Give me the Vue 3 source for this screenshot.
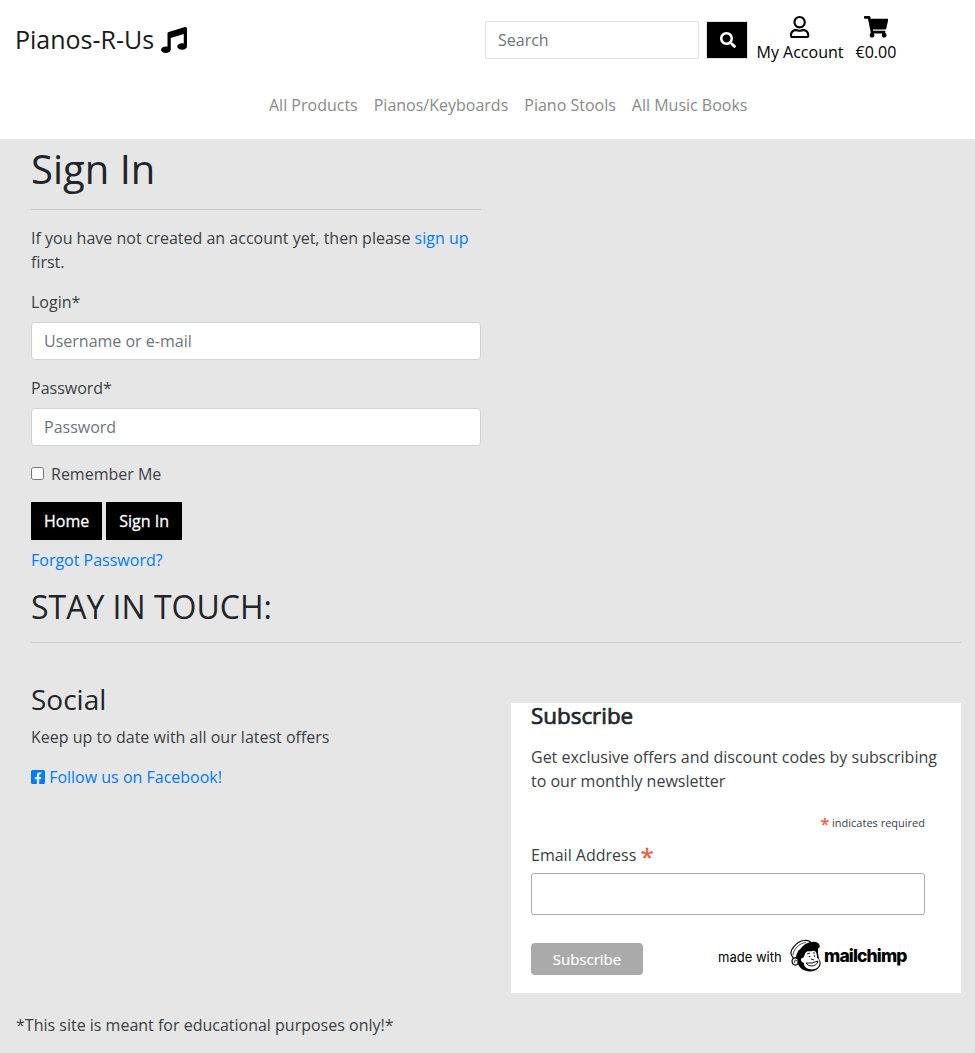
<script setup>
const links = ['All Products', 'Pianos/Keyboards', 'Piano Stools', 'All Music Books']
</script>

<template>
  <div class="page">
    <header>
      <div class="top">
        <a class="brand">Pianos-R-Us
          <svg class="music" viewBox="0 0 512 512"><path d="M511.99 32.01c0-21.71-21.1-37.01-41.6-30.51L150.4 96c-13.3 4.2-22.4 16.5-22.4 30.5v261.42c-10.05-2.38-20.72-3.92-32-3.92-53.02 0-96 28.65-96 64s42.98 64 96 64 96-28.65 96-64V214.31l256-75.02v184.63c-10.05-2.38-20.72-3.92-32-3.92-53.02 0-96 28.65-96 64s42.98 64 96 64 96-28.65 96-64l-.01-351.99z" /></svg>
        </a>
        <form class="search" @submit.prevent>
          <input type="text" placeholder="Search" />
          <button aria-label="Search"><svg viewBox="0 0 512 512"><path d="M505 442.7L405.3 343c-4.5-4.5-10.6-7-17-7H372c27.6-35.3 44-79.700 44-128C416 93.100 322.900 0 208 0S0 93.100 0 208s93.100 208 208 208c48.300 0 92.700-16.400 128-44v16.300c0 6.400 2.500 12.500 7 17l99.700 99.700c9.400 9.400 24.600 9.400 33.900 0l28.300-28.300c9.400-9.400 9.400-24.600.1-34zM208 336c-70.700 0-128-57.200-128-128 0-70.700 57.200-128 128-128 70.700 0 128 57.200 128 128 0 70.700-57.200 128-128 128z" /></svg></button>
        </form>
        <a class="tool account"><svg viewBox="0 0 448 512"><path d="M313.600 304c-28.700 0-42.500 16-89.600 16-47.100 0-60.800-16-89.600-16C60.200 304 0 364.200 0 438.400V464c0 26.500 21.500 48 48 48h352c26.500 0 48-21.500 48-48v-25.600c0-74.200-60.200-134.400-134.400-134.400zM400 464H48v-25.600c0-47.600 38.800-86.400 86.400-86.400 14.600 0 38.300 16 89.600 16 51.700 0 74.900-16 89.600-16 47.600 0 86.400 38.800 86.400 86.400V464zM224 288c79.500 0 144-64.500 144-144S303.500 0 224 0 80 64.500 80 144s64.500 144 144 144zm0-240c52.900 0 96 43.100 96 96s-43.100 96-96 96-96-43.100-96-96 43.100-96 96-96z" /></svg><span>My Account</span></a>
        <a class="tool cart"><svg viewBox="0 0 576 512"><path d="M528.120 301.319l47.273-208C578.806 78.301 567.391 64 551.990 64H159.208l-9.166-44.810C147.758 8.021 137.930 0 126.529 0H24C10.745 0 0 10.745 0 24v16c0 13.255 10.745 24 24 24h69.883l70.248 343.435C147.325 417.100 136 435.222 136 456c0 30.928 25.072 56 56 56s56-25.072 56-56c0-15.674-6.447-29.835-16.824-40h209.647C430.447 426.165 424 440.326 424 456c0 30.928 25.072 56 56 56s56-25.072 56-56c0-22.172-12.888-41.332-31.579-50.405l5.517-24.276c3.413-15.018-8.002-29.319-23.403-29.319H218.117l-6.545-32h293.145c11.206 0 20.920-7.754 23.403-18.681z" /></svg><span>€0.00</span></a>
      </div>
      <nav><a v-for="l in links" :key="l">{{ l }}</a></nav>
    </header>

    <main>
      <section class="signin">
        <h1>Sign In</h1>
        <hr />
        <p>If you have not created an account yet, then please <a class="link">sign up</a> first.</p>
        <label for="login">Login*</label>
        <input id="login" class="field" type="text" placeholder="Username or e-mail" />
        <label for="pw">Password*</label>
        <input id="pw" class="field" type="password" placeholder="Password" />
        <div class="remember"><input id="rem" type="checkbox" /><label for="rem">Remember Me</label></div>
        <div class="buttons"><button>Home</button><button>Sign In</button></div>
        <a class="link forgot">Forgot Password?</a>
      </section>

      <section class="touch">
        <h2>STAY IN TOUCH:</h2>
        <hr />
        <div class="cols">
          <div class="social">
            <h3>Social</h3>
            <p>Keep up to date with all our latest offers</p>
            <a class="link"><svg class="fb" viewBox="0 0 448 512"><path d="M400 32H48A48 48 0 0 0 0 80v352a48 48 0 0 0 48 48h137.250V327.690h-63V256h63v-54.640c0-62.150 37-96.480 93.670-96.480 27.140 0 55.520 4.840 55.520 4.840v61h-31.270c-30.810 0-40.420 19.120-40.420 38.730V256h68.780l-11 71.690h-57.780V480H400a48 48 0 0 0 48-48V80a48 48 0 0 0-48-48z" /></svg> Follow us on Facebook!</a>
          </div>
          <form class="subscribe" @submit.prevent>
            <h4>Subscribe</h4>
            <p>Get exclusive offers and discount codes by subscribing to our monthly newsletter</p>
            <div class="required"><i>*</i> indicates required</div>
            <label for="mail">Email Address <i>*</i></label>
            <input id="mail" type="email" />
            <div class="bottom">
              <button>Subscribe</button>
              <div class="made">
                <span class="with">made with</span>
                <svg class="chimp" viewBox="0 0 46 44">
                  <path d="M13 21 L16 15 L24 11 L34 11 L34 19 L35 25 C38 28 37 34 31 36.500 C24 39 16 36 14 30 L11 27 Z" />
                  <path d="M12 26 C10 25 9 24 8 22 C4 17 13 7 20 6.500 C24 6 27 8 28 10 C21 11 15 15 13 21 Z" fill="#fff" stroke="#000" stroke-width="1.200" />
                  <path d="M9 21 C9 16 15 9 22 8.500" fill="none" stroke="#000" stroke-width=".7" />
                  <path d="M17 15 C19 10 26 7 32 8 C35 9 37 12 35 14 C31 17 29 13 24 14 C20 14 18 16 15 19 Z" />
                  <path d="M21 20 C22 16 27 18 28 17 C32 16 33 19 33 24 C36 25 37 31 33 34 C29 37 19 35 20 29 C17 28 16 25 18 24 C20 24 20 22 21 20 Z" fill="#fff" />
                  <path d="M14 25 C12 23 8 24 8 27 C8 31 11 32 14 30 Z" fill="#fff" stroke="#000" stroke-width="1.200" />
                  <path d="M13 27 C11 25 10 27 11 29 M22 29 Q28 30 34 27 Q33 32 27 32 Q24 32 22 29 M23 20 L26 19 M29 19 L31 19 M27 25 L30 26" fill="none" stroke="#000" stroke-width=".9" />
                  <circle cx="25.500" cy="22.500" r=".8" /><circle cx="30.500" cy="22" r=".8" />
                </svg>
                <span class="word">mailchimp</span>
              </div>
            </div>
          </form>
        </div>
      </section>
    </main>
    <footer>*This site is meant for educational purposes only!*</footer>
  </div>
</template>

<style>
body { background: #e6e6e6; }
</style>

<style scoped>
.page, .page * { box-sizing: border-box; }
.page { width: 975px; height: 1053px; overflow: hidden; background: #e6e6e6; color: #3a4045; font: 400 16px/24px "Open Sans", sans-serif; }
input, button { font: inherit; }
h1, h2, h3, h4, p { margin: 0; }
h1, h2, h3, h4 { color: #212529; font-weight: 400; }
i { font-style: normal; }
header { height: 139px; background: #fff; color: #000; }
.top { display: flex; height: 93px; padding-left: 15px; }
.brand { width: 470px; padding-top: 19px; font-size: 25px; line-height: 40px; color: #1a1a1a; white-space: nowrap; }
.music { width: 26px; height: 26px; vertical-align: -4px; fill: #000; }
.search { display: flex; padding-top: 21px; width: 272px; gap: 7px; }
.search input { width: 214px; height: 38px; padding: 0 12px; border: 1px solid #dee2e6; background: #fff; outline: 0; }
.search button { width: 42px; height: 38px; padding: 0; border: 1px solid #dee2e6; background: #000; display: grid; place-items: center; }
.search svg { width: 16px; height: 16px; fill: #fff; margin-left: 1px; }
.tool { display: flex; flex-direction: column; align-items: center; padding-top: 16px; white-space: nowrap; }
.tool svg { height: 22px; }
.tool span { margin-top: 2px; }
.account { width: 86px; }
.cart { margin-left: 12.5px; }
.cart svg { height: 21.5px; margin-bottom: .5px; }
nav { display: flex; gap: 16px; padding-left: 269px; color: #8a8a8a; }
::placeholder { color: #6c757d; opacity: 1; }
main { padding: 0 14px 0 31px; }
.signin { width: 450px; display: flex; flex-direction: column; }
h1 { font-size: 40px; line-height: 48px; margin-top: 6px; }
hr { width: 100%; border: 0; border-top: 1px solid #cbcbcb; margin: 16px 0 16px; }
.signin p { margin-bottom: 16px; }
.signin > label { margin-bottom: 8px; }
.field { height: 38px; border: 1px solid #ced4da; border-radius: 4px; padding: 0 12px; margin-bottom: 16px; background: #fff; }
.remember { display: flex; height: 24px; align-items: center; gap: 7px; margin-bottom: 16px; }
.remember input { width: 13px; height: 13px; margin: -2px 0 0; }
.buttons { display: flex; gap: 4px; }
.buttons button { height: 38px; padding: 0 13px; border: 0; background: #000; color: #fff; -webkit-text-stroke: .3px #fff; }
.link { color: #007bff; }
.forgot { margin-top: 8px; }
h2 { font-size: 32px; line-height: 38px; margin-top: 16px; }
.touch hr { margin: 16px 0 0; }
.cols { display: grid; grid-template-columns: 450px 450px; gap: 30px; }
.social { padding-top: 39px; }
h3 { font-size: 28px; line-height: 34px; margin-bottom: 9px; }
.social p { margin-bottom: 16px; }
.fb { width: 14px; height: 16px; fill: #007bff; vertical-align: -2px; }
.subscribe { display: flow-root; height: 290px; margin-top: 60px; padding: 0 20px; background: #fff; }
h4 { font-size: 22.4px; line-height: 26px; -webkit-text-stroke: .7px #212529; }
.subscribe p { margin-top: 16px; }
.required { margin: 21px 16px 0 0; height: 18px; line-height: 18px; font-size: 11px; text-align: right; }
i { color: #e85c41; -webkit-text-stroke: .3px #e85c41; }
.required i { font-size: 16px; vertical-align: -3px; line-height: 1; }
.subscribe label { display: block; margin-top: 8px; height: 33px; line-height: 30px; }
.subscribe label i { font-size: 24px; vertical-align: -5px; line-height: 1; }
.subscribe > input { display: block; width: 394px; height: 42px; border: 1px solid #ababab; border-radius: 3px; background: #fff; }
.bottom { display: flex; padding-top: 23px; align-items: flex-start; }
.bottom button { width: 112px; height: 32px; margin-top: 5px; border: 0; border-radius: 4px; padding: 0; background: #aaa; color: #fff; font-size: 15px; -webkit-text-stroke: .2px #fff; }
.made { display: flex; margin-left: 75px; align-items: center; color: #000; height: 40px; }
.with { width: 66px; white-space: nowrap; font: 13px/20px Inter, sans-serif; margin-top: -2px; }
.chimp { width: 46px; height: 44px; flex: none; margin-top: -4px; }
.word { font: 800 17.5px/24px Inter, sans-serif; letter-spacing: -.85px; margin: -5px 0 0 -6px; }
footer { padding: 20px 16px; }
</style>
